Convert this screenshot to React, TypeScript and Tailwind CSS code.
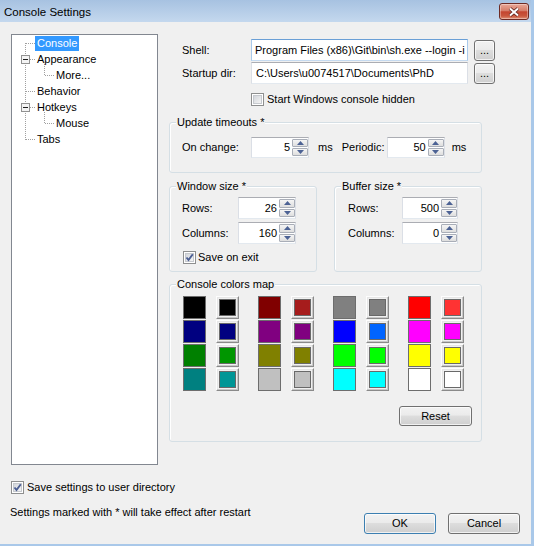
import type { ReactNode } from "react";

const swatches = [
  ["#000000", "#000000", "#800000", "#a61c1c", "#808080", "#808080", "#ff0000", "#ff3333"],
  ["#000080", "#000080", "#800080", "#800080", "#0000ff", "#0064ff", "#ff00ff", "#ff00ff"],
  ["#008000", "#009600", "#808000", "#808000", "#00ff00", "#00ff00", "#ffff00", "#ffff00"],
  ["#008080", "#009696", "#c0c0c0", "#c0c0c0", "#00ffff", "#00ffff", "#ffffff", "#ffffff"],
];

const treeItems = [
  { label: "Console", level: 0, selected: true },
  { label: "Appearance", level: 0 },
  { label: "More...", level: 1 },
  { label: "Behavior", level: 0 },
  { label: "Hotkeys", level: 0 },
  { label: "Mouse", level: 1 },
  { label: "Tabs", level: 0 },
];

function Checkbox({ checked }: { checked?: boolean }) {
  return (
    <span className="flex h-[13px] w-[13px] shrink-0 border border-[#8e8f8f] bg-white p-[1px]">
      <span className="relative flex h-full w-full items-center justify-center border border-[#c6c9ce] bg-[linear-gradient(135deg,#d3d6db,#f4f4f4)]">
        {checked ? (
          <svg width="11" height="11" viewBox="0 0 11 11" className="absolute -left-[2px] -top-[2px]">
            <path d="M2.5 5.5 L4.5 8 L8.8 2.2" fill="none" stroke="#4b5e93" strokeWidth="1.9" />
          </svg>
        ) : null}
      </span>
    </span>
  );
}

function WinButton({ children, className, isDefault }: { children: ReactNode; className: string; isDefault?: boolean }) {
  return (
    <div
      className={`flex shrink-0 items-center justify-center rounded-[3px] border bg-[linear-gradient(#f2f2f2,#ebebeb_45%,#dddddd_50%,#cfcfcf)] shadow-[inset_0_0_0_1px_rgba(255,255,255,0.7)] ${
        isDefault ? "border-[#3c7fb1]" : "border-[#707070]"
      } ${className}`}
    >
      {children}
    </div>
  );
}

function SpinBtn({ up }: { up?: boolean }) {
  return (
    <div className="flex flex-1 items-center justify-center rounded-[1px] border border-[#a9aeb8] bg-[linear-gradient(#f5f5f5,#dedede)]">
      <svg width="7" height="4" viewBox="0 0 7 4">
        {up ? <path d="M0 4 L3.5 0 L7 4 Z" fill="#4c6294" /> : <path d="M0 0 L3.5 4 L7 0 Z" fill="#4c6294" />}
      </svg>
    </div>
  );
}

function Spin({ value, className }: { value: string; className: string }) {
  return (
    <div className={`flex shrink-0 border border-[#abadb3] border-x-[#dbdfe6] border-b-[#e3e9ef] bg-white ${className}`}>
      <div className="flex flex-1 items-center justify-end pr-[2px]">{value}</div>
      <div className="my-[1px] flex w-[16px] flex-col gap-[1px]">
        <SpinBtn up />
        <SpinBtn />
      </div>
    </div>
  );
}

function Group({ title, className, pad, children }: { title: string; className: string; pad: string; children: ReactNode }) {
  return (
    <div className={`rounded-[3px] border border-[#d5dfe5] shadow-[inset_1px_1px_0_#ffffff] ${className}`}>
      <div className="-mt-[7px] ml-[6px] w-fit bg-[#f0f0f0] px-[1px] leading-[13px]">{title}</div>
      <div className={pad}>{children}</div>
    </div>
  );
}

function Tree() {
  const dots = { stroke: "#a0a0a0", strokeDasharray: "1 1", shapeRendering: "crispEdges" as const };
  return (
    <div className="relative mt-[12px] h-[431px] w-[147px] shrink-0 border border-[#828790] bg-white">
      <svg width="145" height="120" className="absolute left-0 top-0">
        <line x1="13.5" y1="8" x2="13.5" y2="105" {...dots} />
        {[8.5, 24.5, 56.5, 72.5, 104.5].map((y) => (
          <line key={y} x1="14" y1={y} x2="23" y2={y} {...dots} />
        ))}
        <line x1="32.5" y1="29" x2="32.5" y2="41" {...dots} />
        <line x1="33" y1="40.5" x2="42" y2="40.5" {...dots} />
        <line x1="32.5" y1="77" x2="32.5" y2="89" {...dots} />
        <line x1="33" y1="88.5" x2="42" y2="88.5" {...dots} />
        {[24.5, 72.5].map((y) => (
          <g key={y} shapeRendering="crispEdges">
            <rect x="9.5" y={y - 4} width="8" height="8" fill="#f4f4f4" stroke="#919191" />
            <line x1="11" y1={y} x2="16" y2={y} stroke="#1e1e1e" />
          </g>
        ))}
      </svg>
      <div className="relative flex flex-col">
        {treeItems.map((item) => (
          <div key={item.label} className={`flex h-[16px] ${item.level ? "pl-[42px]" : "pl-[23px]"}`}>
            <span
              className={`mt-[1px] h-[15px] px-[2px] leading-[15px] ${
                item.selected ? "bg-[#3399ff] text-white" : "text-black"
              }`}
            >
              {item.label}
            </span>
          </div>
        ))}
      </div>
    </div>
  );
}

function ColorsMap() {
  return (
    <div className="mt-[5px] flex flex-col gap-[1px]">
      {swatches.map((row, r) => (
        <div key={r} className="flex gap-[19px]">
          {[0, 1, 2, 3].map((p) => (
            <div key={p} className="flex gap-[10px]">
              <div className="h-[23px] w-[23px] border border-[#6d6d6d]" style={{ backgroundColor: row[p * 2] }} />
              <div className="flex h-[23px] w-[23px] items-center justify-center border border-b-[#8a8a8a] border-l-[#fdfdfd] border-r-[#8a8a8a] border-t-[#fdfdfd] bg-[#f0f0f0] shadow-[inset_-1px_-1px_0_#c8c8c8,inset_1px_1px_0_#e6e6e6]">
                <div className="h-[17px] w-[17px] border border-[#696969]" style={{ backgroundColor: row[p * 2 + 1] }} />
              </div>
            </div>
          ))}
        </div>
      ))}
    </div>
  );
}

export default function App() {
  return (
    <div className="flex h-[546px] w-[534px] flex-col overflow-hidden border-b-[2px] border-r-[3px] border-[#a9c8e9] bg-[#f0f0f0] font-['Liberation_Sans',Arial,sans-serif] text-[11px] leading-[13px] text-black">
      <div className="flex h-[22px] shrink-0 items-start justify-between bg-[linear-gradient(#a7c2e1,#c4d8ee)] pl-[4px] pr-[2px]">
        <span className="mt-[5px] text-[11.5px] leading-[14px]">Console Settings</span>
        <div className="mt-[3px] flex h-[17px] w-[30px] items-center justify-center rounded-[3px] border border-[#6e2b24] bg-[linear-gradient(#e9a898,#d57d69_45%,#c4452f_52%,#c9573d_80%,#e19378)] shadow-[inset_0_0_0_1px_rgba(255,255,255,0.35)]">
          <svg width="14" height="10" viewBox="0 0 14 10">
            <path d="M3 1.5 L11 8.5 M11 1.5 L3 8.5" stroke="#5a211b" strokeWidth="3.6" />
            <path d="M3 1.5 L11 8.5 M11 1.5 L3 8.5" stroke="#ffffff" strokeWidth="2" />
          </svg>
        </div>
      </div>

      <div className="flex pl-[11px]">
        <Tree />

        <div className="ml-[11px] flex flex-col">
          <div className="mt-[17px] flex items-center">
            <span className="w-[82px] shrink-0 pl-[13px]">Shell:</span>
            <div className="flex h-[22px] w-[217px] shrink-0 items-center overflow-hidden whitespace-nowrap border border-[#6a9fd6] border-x-[#a9c9ea] border-b-[#c5daf0] bg-white pl-[3px]">
              Program Files (x86)\Git\bin\sh.exe --login -i
            </div>
            <WinButton className="ml-[6px] h-[21px] w-[21px]">
              <span className="mt-[1px]">...</span>
            </WinButton>
          </div>
          <div className="mt-[1px] flex items-center">
            <span className="w-[82px] shrink-0 pl-[13px]">Startup dir:</span>
            <div className="flex h-[22px] w-[217px] shrink-0 items-center overflow-hidden whitespace-nowrap border border-[#abadb3] border-x-[#dbdfe6] border-b-[#e3e9ef] bg-white pl-[4px]">
              C:\Users\u0074517\Documents\PhD
            </div>
            <WinButton className="ml-[6px] h-[21px] w-[21px]">
              <span className="mt-[1px]">...</span>
            </WinButton>
          </div>
          <div className="mt-[9px] flex h-[13px] items-center gap-[3px] pl-[82px]">
            <Checkbox />
            <span>Start Windows console hidden</span>
          </div>

          <Group title="Update timeouts *" className="mt-[16px] w-[313px]" pad="pb-[14px] pl-[12px]">
            <div className="mt-[8px] flex h-[21px] items-center">
              <span className="w-[69px] shrink-0">On change:</span>
              <Spin value="5" className="h-[21px] w-[58px]" />
              <span className="ml-[9px]">ms</span>
              <span className="ml-[9px] w-[45px] shrink-0">Periodic:</span>
              <Spin value="50" className="h-[21px] w-[58px]" />
              <span className="ml-[7px]">ms</span>
            </div>
          </Group>

          <div className="mt-[13px] flex">
            <Group title="Window size *" className="w-[148px]" pad="pb-[7px] pl-[12px]">
              <div className="mt-[4px] flex h-[22px] items-center">
                <span className="w-[56px] shrink-0">Rows:</span>
                <Spin value="26" className="h-[22px] w-[58px]" />
              </div>
              <div className="mt-[3px] flex h-[22px] items-center">
                <span className="w-[56px] shrink-0">Columns:</span>
                <Spin value="160" className="h-[22px] w-[58px]" />
              </div>
              <div className="ml-[1px] mt-[7px] flex h-[13px] items-center gap-[2px]">
                <Checkbox checked />
                <span>Save on exit</span>
              </div>
            </Group>
            <Group title="Buffer size *" className="ml-[17px] w-[148px]" pad="pl-[13px]">
              <div className="mt-[4px] flex h-[22px] items-center">
                <span className="w-[54px] shrink-0">Rows:</span>
                <Spin value="500" className="h-[22px] w-[56px]" />
              </div>
              <div className="mt-[3px] flex h-[22px] items-center">
                <span className="w-[54px] shrink-0">Columns:</span>
                <Spin value="0" className="h-[22px] w-[56px]" />
              </div>
            </Group>
          </div>

          <Group title="Console colors map" className="mt-[12px] w-[313px]" pad="pb-[15px] pl-[13px] pr-[9px]">
            <ColorsMap />
            <div className="mt-[15px] flex justify-end">
              <WinButton className="h-[20px] w-[73px]">Reset</WinButton>
            </div>
          </Group>
        </div>
      </div>

      <div className="mt-[16px] flex h-[13px] items-center gap-[3px] pl-[11px]">
        <Checkbox checked />
        <span>Save settings to user directory</span>
      </div>

      <div className="flex pl-[10px] pr-[11px]">
        <span className="mt-[12px]">Settings marked with * will take effect after restart</span>
        <div className="ml-auto mt-[19px] flex gap-[12px]">
          <WinButton isDefault className="h-[21px] w-[72px]">OK</WinButton>
          <WinButton className="h-[21px] w-[72px]">Cancel</WinButton>
        </div>
      </div>
    </div>
  );
}
